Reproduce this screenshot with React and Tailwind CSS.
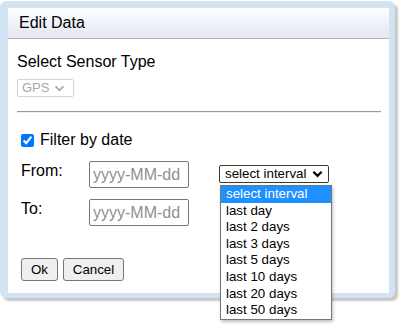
import { useState } from "react";

const intervals = [
  "select interval",
  "last day",
  "last 2 days",
  "last 3 days",
  "last 5 days",
  "last 10 days",
  "last 20 days",
  "last 50 days",
];

function Chevron({ className, stroke = "#000", width = 2 }) {
  return (
    <svg viewBox="0 0 12 8" className={className} fill="none">
      <polyline points="1.5,1.5 6,6 10.5,1.5" stroke={stroke} strokeWidth={width} />
    </svg>
  );
}

export default function App() {
  const [filter, setFilter] = useState(true);

  return (
    <div className="w-[400px] h-[325px] bg-white font-['Liberation_Sans',Arial,sans-serif] text-black">
      <div className="mt-[1px] w-[395px] h-[297px] rounded-[6px] bg-[#d2e3f4] pt-[7px] pl-[8px] pr-[6px] pb-[5px] shadow-[3px_3px_2px_rgba(0,0,0,0.22)]">
        <div className="relative h-full bg-white">
          {/* header */}
          <div className="h-[31px] flex items-center pl-[11px] border-b border-[#b4b4b4] bg-gradient-to-b from-[#fefefe] to-[#e3e7f3] text-[16px]">
            Edit Data
          </div>

          <div className="pl-[9px] pr-[8px]">
            <div className="mt-[14px] text-[16px] leading-[18px]">Select Sensor Type</div>

            <div className="mt-[8px] w-[57px] h-[18px] border border-[#d6d6d6] rounded-[2px] flex items-center pl-[4px] gap-[5px] text-[13px] text-[#a8a8a8]">
              GPS
              <Chevron className="w-[11px] h-[7px]" stroke="#a8a8a8" />
            </div>

            <div className="mt-[14px] border-t border-[#9b9b9b] border-b border-b-[#eeeeee]" />

            <div className="pl-[4px]">
              <label className="mt-[18px] flex items-center gap-[6px] text-[16px] leading-[18px]">
                <input
                  type="checkbox"
                  checked={filter}
                  onChange={(e) => setFilter(e.target.checked)}
                  className="w-[13px] h-[13px] accent-[#0075ff]"
                />
                Filter by date
              </label>

              <div className="mt-[12px] flex items-start">
                <span className="w-[68px] pt-[1px] text-[16px] leading-[18px]">From:</span>
                <input
                  placeholder="yyyy-MM-dd"
                  className="w-[100px] h-[27px] border border-[#767676] rounded-[2px] px-[3px] text-[16px] placeholder:text-[#8f8f8f] outline-none"
                />
                <div className="relative ml-[30px] mt-[4px]">
                  <div className="w-[110px] h-[18px] border border-[#3b3b3b] rounded-[2px] flex items-center justify-between pl-[5px] pr-[5px] text-[13.33px]">
                    select interval
                    <Chevron className="w-[11px] h-[8px]" width={2.4} />
                  </div>
                  <div className="absolute left-[1px] top-[20px] w-[112px] bg-white border border-[#767676] shadow-[1px_2px_3px_rgba(0,0,0,0.25)] z-10">
                    {intervals.map((t, i) => (
                      <div
                        key={t}
                        className={
                          "h-[16.6px] leading-[16.6px] pl-[5px] text-[13.33px] " +
                          (i === 0 ? "bg-[#1e90ff] text-white" : "")
                        }
                      >
                        {t}
                      </div>
                    ))}
                  </div>
                </div>
              </div>

              <div className="mt-[11px] flex items-start">
                <span className="w-[68px] pt-[1px] text-[16px] leading-[18px]">To:</span>
                <input
                  placeholder="yyyy-MM-dd"
                  className="w-[100px] h-[27px] border border-[#767676] rounded-[2px] px-[3px] text-[16px] placeholder:text-[#8f8f8f] outline-none"
                />
              </div>

              <div className="mt-[32px] flex gap-[5px]">
                <button className="w-[37px] h-[23px] bg-[#efefef] border border-[#767676] rounded-[3px] text-[13.33px]">
                  Ok
                </button>
                <button className="w-[61px] h-[23px] bg-[#efefef] border border-[#767676] rounded-[3px] text-[13.33px]">
                  Cancel
                </button>
              </div>
            </div>
          </div>
        </div>
      </div>
    </div>
  );
}
